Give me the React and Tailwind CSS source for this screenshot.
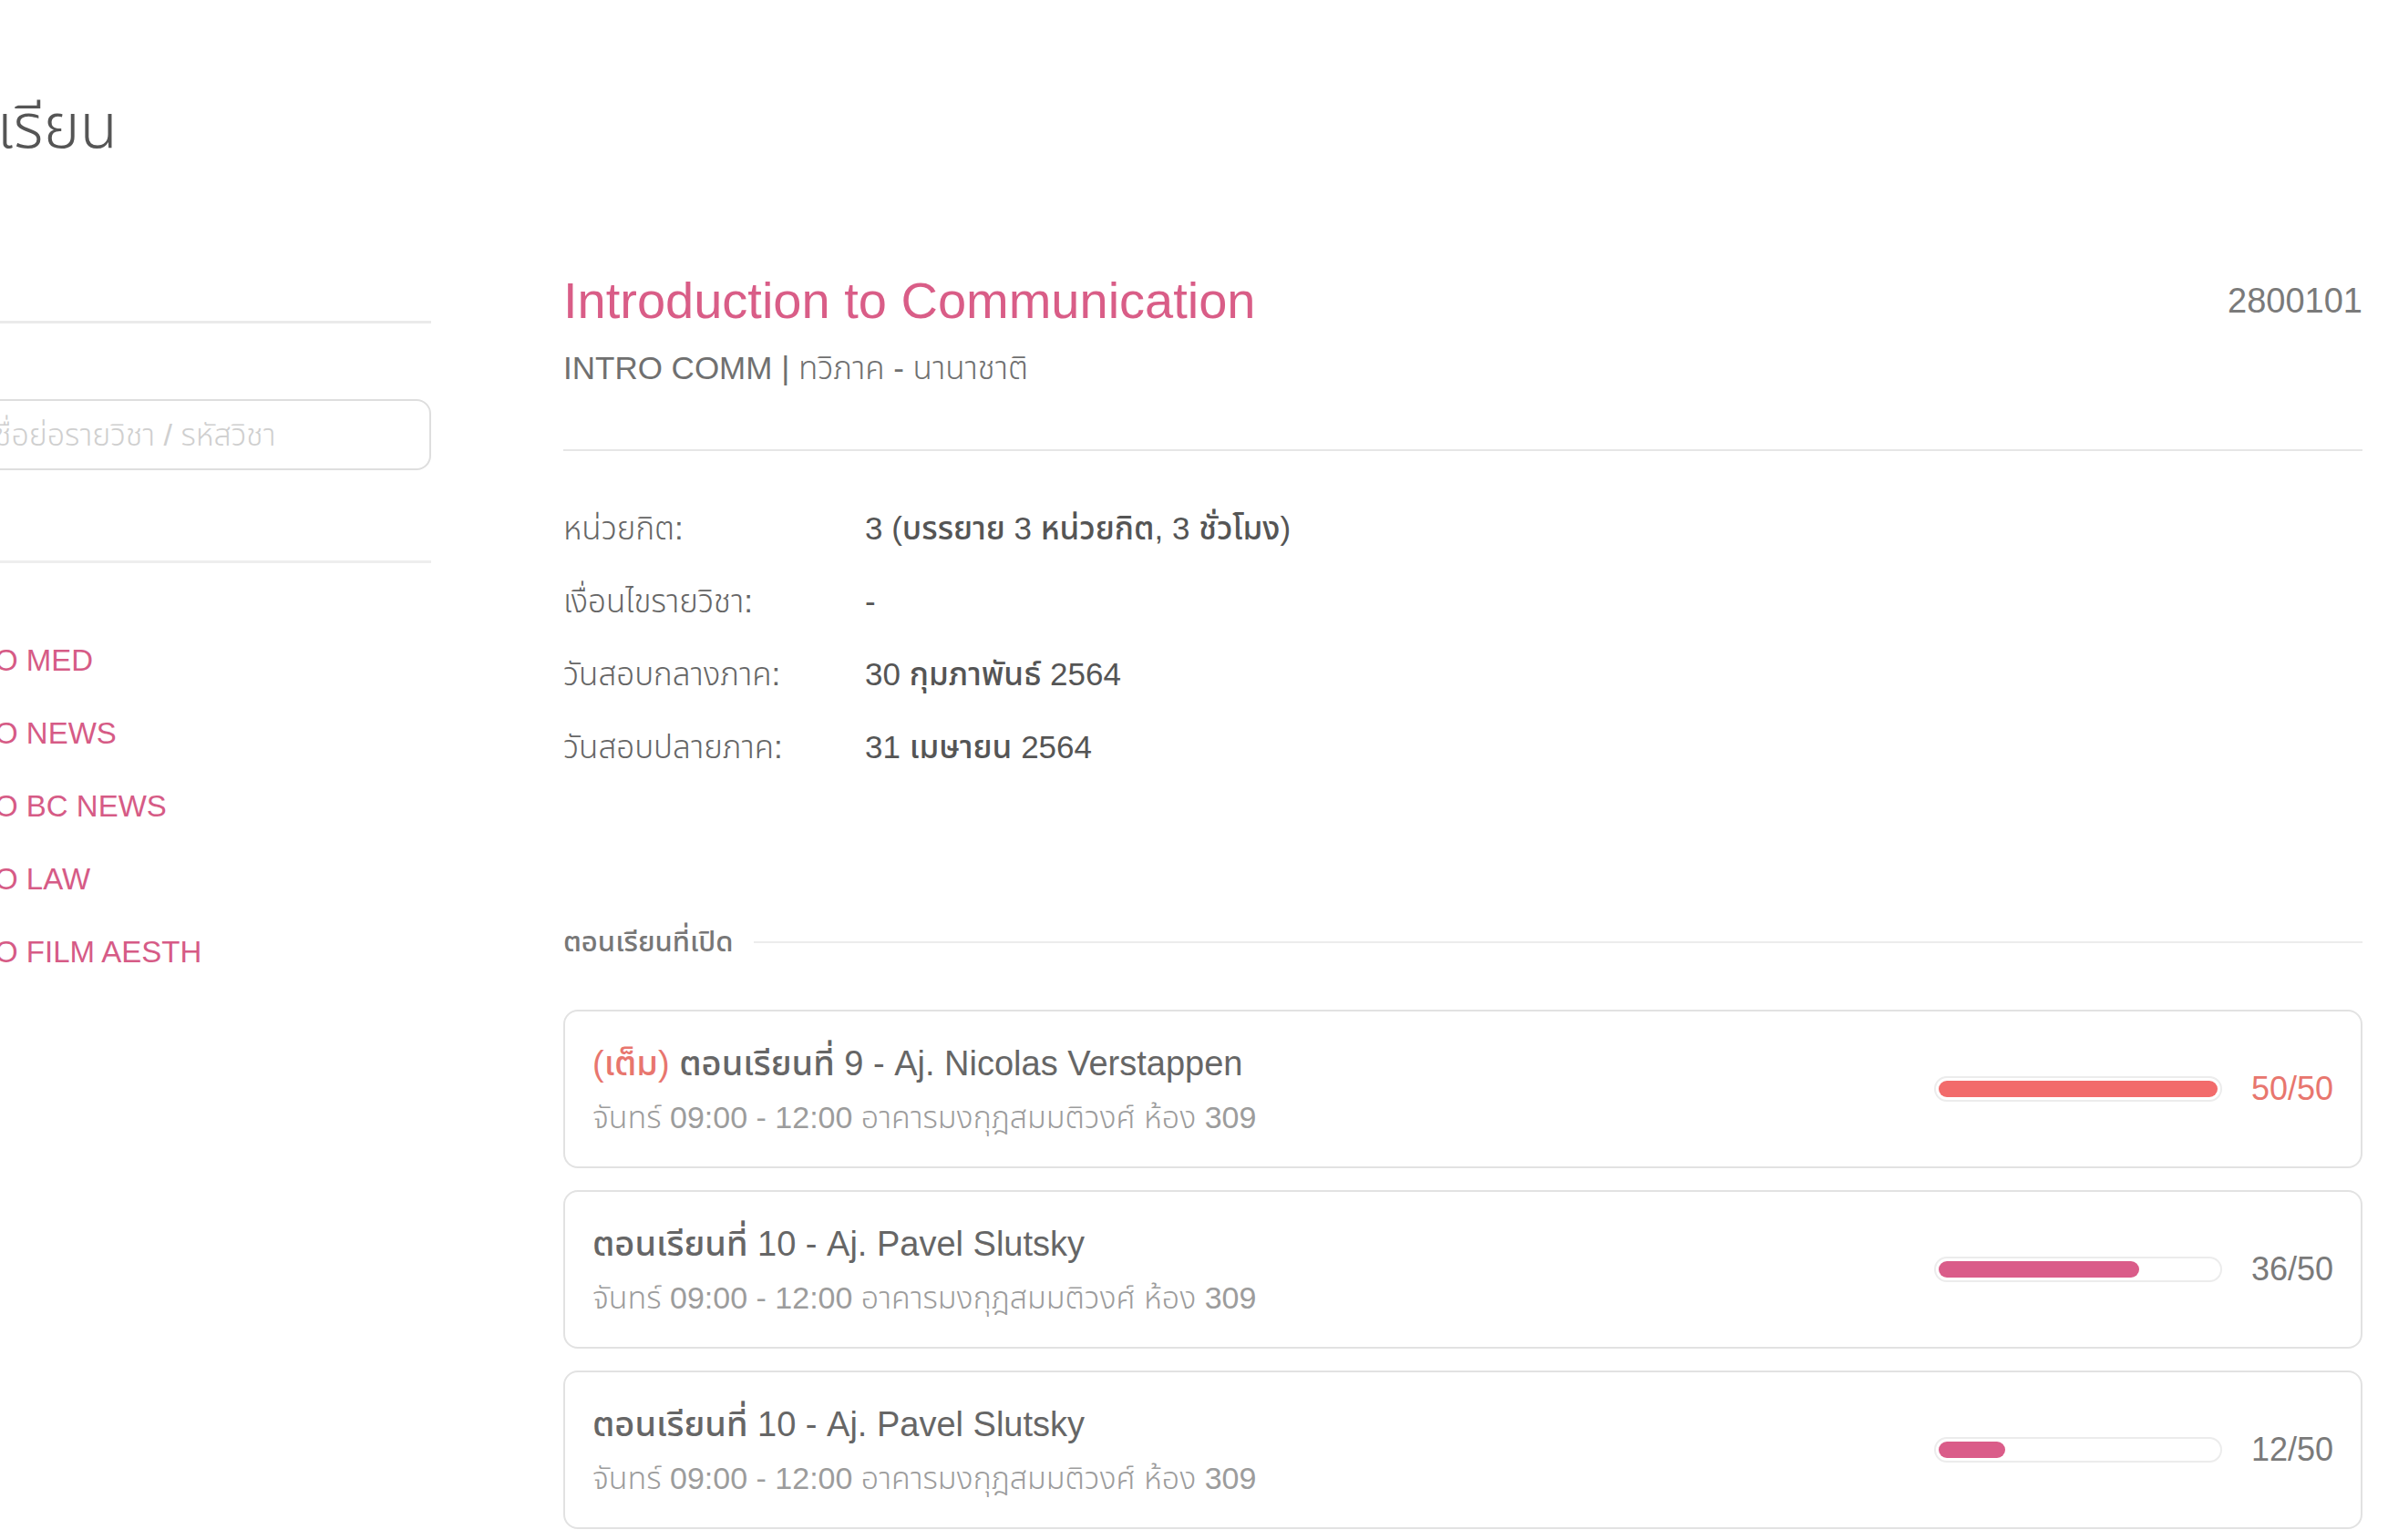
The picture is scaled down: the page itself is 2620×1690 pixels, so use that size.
import React from "react";

const sections = [
  { full: true, title: "ตอนเรียนที่ 9 - Aj. Nicolas Verstappen", count: 50 },
  { full: false, title: "ตอนเรียนที่ 10 - Aj. Pavel Slutsky", count: 36 },
  { full: false, title: "ตอนเรียนที่ 10 - Aj. Pavel Slutsky", count: 12 },
];

const details = [
  ["หน่วยกิต:", "3 (บรรยาย 3 หน่วยกิต, 3 ชั่วโมง)"],
  ["เงื่อนไขรายวิชา:", "-"],
  ["วันสอบกลางภาค:", "30 กุมภาพันธ์ 2564"],
  ["วันสอบปลายภาค:", "31 เมษายน 2564"],
];

const courses = ["INTRO MED", "INTRO NEWS", "INTRO BC NEWS", "INTRO LAW", "INTRO FILM AESTH"];

function SectionCard({ s }) {
  const pct = (s.count / 50) * 100;
  return (
    <div className="flex h-[174px] items-center justify-between rounded-[16px] border-2 border-[#e2e2e2] bg-white px-[30px]">
      <div className="flex flex-col">
        <div className="text-[38px] leading-[52px] font-medium text-[#666]">
          {s.full && <span className="text-[#e8766e]">(เต็ม) </span>}
          {s.title}
        </div>
        <div className="mt-[10px] text-[34px] leading-[46px] font-light text-[#9c9c9c]">
          จันทร์ 09:00 - 12:00 อาคารมงกุฎสมมติวงศ์ ห้อง 309
        </div>
      </div>
      <div className="flex items-center gap-[32px]">
        <div className="h-[28px] w-[316px] rounded-full border-2 border-[#ececec] bg-white p-[3px]">
          <div
            className={s.full ? "h-full rounded-full bg-[#f26b6b]" : "h-full rounded-full bg-[#da5c89]"}
            style={{ width: pct + "%" }}
          />
        </div>
        <span className={s.full ? "w-[90px] text-right text-[36px] text-[#e8766e]" : "w-[90px] text-right text-[36px] text-[#7a7a7a]"}>
          {s.count}/50
        </span>
      </div>
    </div>
  );
}

export default function App() {
  return (
    <div className="h-[1690px] w-[2620px] overflow-hidden bg-white font-['Liberation_Sans','Noto_Sans_Thai','Noto_Sans',sans-serif]">
      <div className="-ml-[83px] flex w-[2675px] flex-col">
        <div className="flex h-[278px] items-start pt-[94px]">
          <div className="flex w-[212px] justify-end">
            <h1 className="whitespace-nowrap text-[68px] leading-[88px] font-light text-[#555]">ตารางเรียน</h1>
          </div>
        </div>
        <div className="flex gap-[145px]">
          {/* Sidebar */}
          <aside className="flex w-[556px] flex-col">
            <div className="mt-[74px] h-[3px] bg-[#eaeaea]" />
            <div className="mt-[83px] flex h-[78px] items-center rounded-[16px] border-2 border-[#dedede] pl-[75px]">
              <span className="whitespace-nowrap text-[34px] font-light text-[#cfcfcf]">ชื่อย่อรายวิชา / รหัสวิชา</span>
            </div>
            <div className="mt-[99px] h-[3px] bg-[#eeeeee]" />
            <ul className="mt-[67px] flex flex-col">
              {courses.map((c) => (
                <li key={c} className="h-[80px] whitespace-nowrap text-[33px] leading-[80px] text-[#d65b86]">
                  {c}
                </li>
              ))}
            </ul>
          </aside>

          {/* Main */}
          <main className="mt-[18px] flex flex-1 flex-col">
            <div className="flex items-start justify-between">
              <div className="flex flex-col">
                <h2 className="text-[56px] leading-[68px] text-[#d95d87]">Introduction to Communication</h2>
                <p className="mt-[18px] text-[35px] leading-[44px] font-light text-[#707070]">INTRO COMM | ทวิภาค - นานาชาติ</p>
              </div>
              <span className="pt-[12px] text-[38px] leading-[44px] text-[#7a7a7a]">2800101</span>
            </div>
            <div className="mt-[67px] h-[2px] bg-[#e6e6e6]" />
            <div className="mt-[45px] flex flex-col">
              {details.map(([k, v]) => (
                <div key={k} className="flex h-[80px] items-center">
                  <span className="w-[331px] text-[35px] font-light text-[#666]">{k}</span>
                  <span className="text-[35px] font-medium text-[#555]">{v}</span>
                </div>
              ))}
            </div>
            <div className="mt-[154px] flex items-center gap-[22px]">
              <span className="text-[31px] leading-[40px] font-medium text-[#777]">ตอนเรียนที่เปิด</span>
              <div className="h-[2px] flex-1 bg-[#ececec]" />
            </div>
            <div className="mt-[54px] flex flex-col gap-[24px]">
              {sections.map((s, i) => (
                <SectionCard key={i} s={s} />
              ))}
            </div>
          </main>
        </div>
      </div>
    </div>
  );
}
